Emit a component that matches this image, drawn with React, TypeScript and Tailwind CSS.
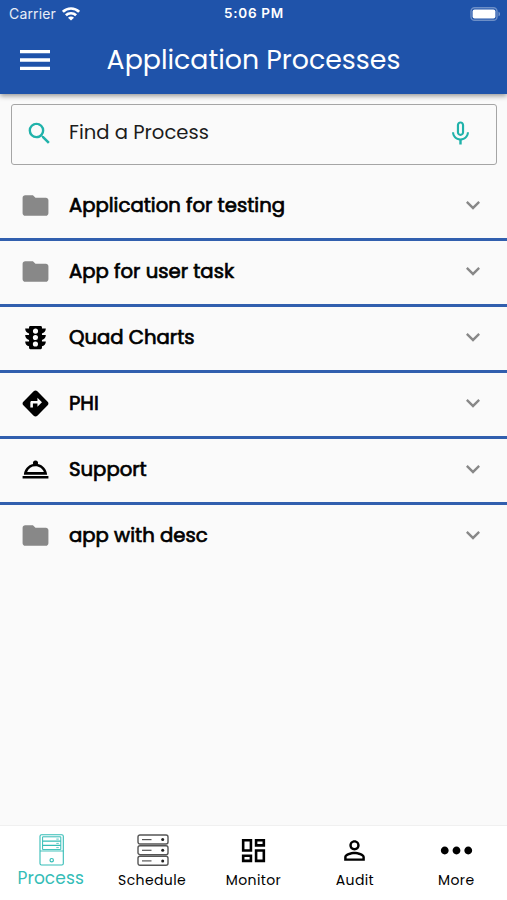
import type { ReactNode } from "react"
import {
  MdDirections,
  MdExpandMore,
  MdFolder,
  MdMenu,
  MdMicNone,
  MdMoreHoriz,
  MdOutlineDashboard,
  MdOutlineRoomService,
  MdPersonOutline,
  MdSearch,
  MdTraffic,
} from "react-icons/md"

interface ProcessItem {
  name: string
  icon: ReactNode
}

interface TabItem {
  label: string
  icon: ReactNode
  style: string
}

const folder = <MdFolder className="w-[31px] h-[31px] text-[#888888]" />

const processes: ProcessItem[] = [
  { name: "Application for testing", icon: folder },
  { name: "App for user task", icon: folder },
  { name: "Quad Charts", icon: <MdTraffic className="w-[31px] h-[31px]" /> },
  { name: "PHI", icon: <MdDirections className="w-[31px] h-[31px]" /> },
  { name: "Support", icon: <MdOutlineRoomService className="w-[31px] h-[31px]" /> },
  { name: "app with desc", icon: folder },
]

function TowerIcon() {
  return (
    <svg className="ml-[2px]" width="26" height="32" viewBox="0 0 26 32" fill="none" stroke="currentColor">
      <rect x="1" y="0.8" width="23.3" height="30.2" rx="1.5" strokeWidth="1.1" />
      <path d="M3.6 2.8h18.2v12.8H3.6z" />
      <path d="M3.6 7.1h18.2M3.6 11.4h18.2" strokeWidth="1.3" />
      <path d="M17.3 5.1h2.5M17.3 9.4h2.5M17.3 13.6h2.5" strokeWidth="0.8" />
      <path d="M1 17h23.3" strokeWidth="0.9" />
      <circle cx="12.7" cy="26.2" r="1.7" strokeWidth="1.2" />
    </svg>
  )
}

function ServerIcon() {
  return (
    <svg className="ml-[1px]" width="32" height="32" viewBox="0 0 32 32" fill="none" stroke="#555555">
      {[1, 11.7, 22.3].map((y) => (
        <g key={y}>
          <rect x="1" y={y} width="30" height="9" rx="2" strokeWidth="1.4" />
          <path d={`M5 ${y + 4.6}h9.5`} strokeWidth="1.2" />
          <circle cx="25.7" cy={y + 4.6} r="1.5" fill="#222222" stroke="none" />
        </g>
      ))}
    </svg>
  )
}

const tabs: TabItem[] = [
  { label: "Process", icon: <TowerIcon />, style: "text-[17px] tracking-[0.1px] mt-[1px]" },
  { label: "Schedule", icon: <ServerIcon />, style: "text-[14px] tracking-[0.4px] mt-[3px]" },
  { label: "Monitor", icon: <MdOutlineDashboard className="w-[31px] h-[31px] ml-[1px]" />, style: "text-[14px] tracking-[0.4px] mt-[3px]" },
  { label: "Audit", icon: <MdPersonOutline className="w-[31px] h-[31px]" />, style: "text-[14px] tracking-[0.4px] mt-[3px]" },
  { label: "More", icon: <MdMoreHoriz className="w-[47px] h-[47px]" />, style: "text-[14px] tracking-[0.4px] mt-[3px]" },
]

function StatusBar() {
  return (
    <div className="h-[27px] grid grid-cols-3 items-center pl-[9px] pr-[6px] text-[14px] font-['Inter',sans-serif]">
      <div className="flex items-center gap-[6px]">
        <span className="tracking-[0.15px] text-white/90">Carrier</span>
        <svg width="18" height="14" viewBox="0 0 18 14" fill="none" stroke="white" strokeWidth="2.7">
          <path d="M0.9 4.8a11.6 11.6 0 0 1 16.2 0" />
          <path d="M3.9 8.3a7.4 7.4 0 0 1 10.2 0" />
          <path d="M9 13.6 6 10.8a4.2 4.2 0 0 1 6 0z" fill="white" stroke="none" />
        </svg>
      </div>
      <span className="pr-[2px] text-center font-semibold text-[13.5px] tracking-[0.7px]">5:06 PM</span>
      <svg className="justify-self-end" width="31" height="14" viewBox="0 0 31 14" fill="none">
        <rect x="1" y="0.7" width="26" height="12.6" rx="3.6" stroke="white" strokeOpacity="0.35" strokeWidth="1.4" />
        <rect x="2.6" y="2.4" width="22.8" height="9.2" rx="2" fill="white" />
        <path d="M28.5 4.7c2 .7 2 3.9 0 4.6z" fill="white" fillOpacity="0.4" />
      </svg>
    </div>
  )
}

export default function App() {
  return (
    <div className="h-[900px] w-full flex flex-col overflow-hidden bg-[#fafafa] text-black font-['Poppins','Inter',sans-serif]">
      {/* Header */}
      <header className="relative h-[94px] shrink-0 bg-[#1f53aa] text-white shadow-[0_2px_5px_rgba(0,0,0,0.4)]">
        <StatusBar />
        <div className="h-[66px] grid grid-cols-[70px_1fr_70px] items-center">
          <MdMenu className="w-10 h-10 ml-[15px]" />
          <h1 className="text-center text-[26.8px] leading-none whitespace-nowrap">Application Processes</h1>
        </div>
      </header>

      <main className="flex-1">
        {/* Search */}
        <div className="mt-[10px] ml-[11px] mr-[10px] h-[61px] flex items-center rounded-[3px] border border-[#a5a5a5] pl-[13px] pr-[21px]">
          <MdSearch className="w-[29px] h-[29px] mb-[2px] text-[#20b2aa]" />
          <span className="ml-[15px] flex-1 text-[19.6px] leading-none pb-[4px] text-[#1c1c1c]">Find a Process</span>
          <MdMicNone className="w-[29px] h-[29px] mb-[2px] text-[#20b2aa]" />
        </div>

        {/* Process list */}
        <ul className="mt-[10px]">
          {processes.map((item) => (
            <li
              key={item.name}
              className="h-[66px] flex items-center pl-5 pr-5 border-b-3 border-[#315fae] last:border-transparent"
            >
              <span className="w-[49px] pb-[3px]">{item.icon}</span>
              <span className="flex-1 text-[19.65px] leading-none pb-[2px] [-webkit-text-stroke:0.7px_black]">{item.name}</span>
              <MdExpandMore className="w-[28px] h-[28px] mb-[4px] text-[#888888]" />
            </li>
          ))}
        </ul>
      </main>

      {/* Bottom tabs */}
      <nav className="h-[75px] shrink-0 grid grid-cols-5 bg-white border-t border-[#f0f0f0]">
        {tabs.map((tab, idx) => (
          <div
            key={tab.label}
            className={`flex flex-col items-center pt-[8px] ${idx === 0 ? "text-[#35bdb7]" : "text-black"}`}
          >
            <div className="h-8 flex items-center justify-center">{tab.icon}</div>
            <span className={`leading-[22px] ${tab.style}`}>{tab.label}</span>
          </div>
        ))}
      </nav>
    </div>
  )
}
